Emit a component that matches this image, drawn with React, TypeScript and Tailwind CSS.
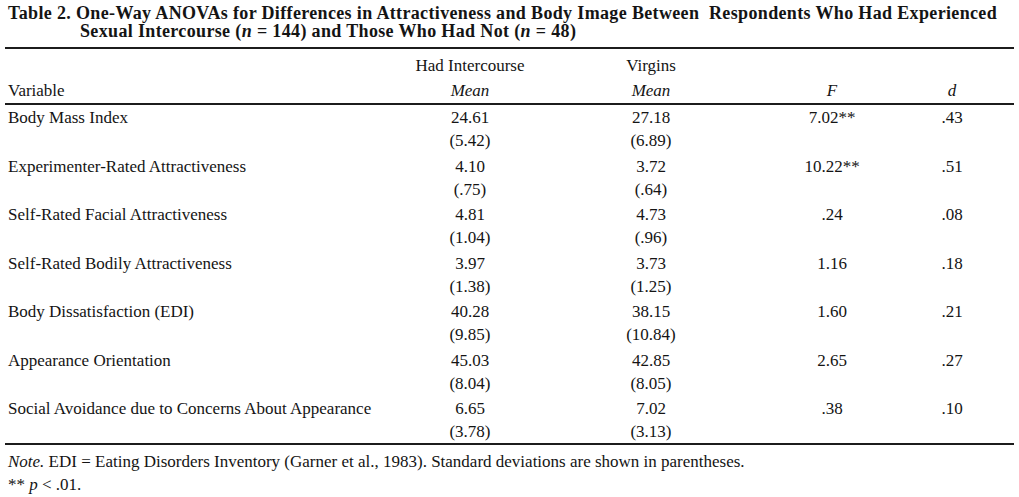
const rows = [
  { name: "Body Mass Index", had: ["24.61", "(5.42)"], vir: ["27.18", "(6.89)"], f: "7.02**", d: ".43" },
  { name: "Experimenter-Rated Attractiveness", had: ["4.10", "(.75)"], vir: ["3.72", "(.64)"], f: "10.22**", d: ".51" },
  { name: "Self-Rated Facial Attractiveness", had: ["4.81", "(1.04)"], vir: ["4.73", "(.96)"], f: ".24", d: ".08" },
  { name: "Self-Rated Bodily Attractiveness", had: ["3.97", "(1.38)"], vir: ["3.73", "(1.25)"], f: "1.16", d: ".18" },
  { name: "Body Dissatisfaction (EDI)", had: ["40.28", "(9.85)"], vir: ["38.15", "(10.84)"], f: "1.60", d: ".21" },
  { name: "Appearance Orientation", had: ["45.03", "(8.04)"], vir: ["42.85", "(8.05)"], f: "2.65", d: ".27" },
  { name: "Social Avoidance due to Concerns About Appearance", had: ["6.65", "(3.78)"], vir: ["7.02", "(3.13)"], f: ".38", d: ".10" },
];

const cols = "grid grid-cols-[392px_140px_222px_140px_100px]";

function Rule({ className = "" }: { className?: string }) {
  return <div className={`mx-[5px] h-[2px] bg-[#1c1c1c] ${className}`} />;
}

export default function App() {
  return (
    <div className="h-[497px] w-[1019px] overflow-hidden bg-white font-['Liberation_Serif','Times_New_Roman',serif] text-[17px] text-[#141414]">
      <div className="pl-2 pt-[4px] text-[18px] font-bold leading-[18px] tracking-[0.35px]">
        <div>Table 2. One-Way ANOVAs for Differences in Attractiveness and Body Image Between{"\u00a0 "}Respondents Who Had Experienced</div>
        <div className="pl-[72px]">
          Sexual Intercourse (<i>n</i> = 144) and Those Who Had Not (<i>n</i> = 48)
        </div>
      </div>
      <Rule className="mt-[7px]" />

      <div className={`${cols} mt-[4px] pl-2 leading-[25px]`}>
        <div className="flex flex-col">
          <span>&nbsp;</span>
          <span>Variable</span>
        </div>
        <div className="flex flex-col items-center">
          <span>Had Intercourse</span>
          <span className="italic">Mean</span>
        </div>
        <div className="flex flex-col items-center">
          <span>Virgins</span>
          <span className="italic">Mean</span>
        </div>
        <div className="flex flex-col items-center">
          <span>&nbsp;</span>
          <span className="italic">F</span>
        </div>
        <div className="flex flex-col items-center">
          <span>&nbsp;</span>
          <span className="italic">d</span>
        </div>
      </div>
      <Rule />

      <div className="pl-2 pt-[1px] leading-[23px]">
        {rows.map((row, i) => (
          <div key={row.name} className={`${cols} ${i < rows.length - 1 ? "pb-[2.5px]" : ""}`}>
            <div>{row.name}</div>
            <div className="flex flex-col items-center">
              <span>{row.had[0]}</span>
              <span>{row.had[1]}</span>
            </div>
            <div className="flex flex-col items-center">
              <span>{row.vir[0]}</span>
              <span>{row.vir[1]}</span>
            </div>
            <div className="text-center">{row.f}</div>
            <div className="text-center">{row.d}</div>
          </div>
        ))}
      </div>
      <Rule />

      <div className="mt-[5px] pl-2 leading-[23px]">
        <div>
          <i>Note.</i> EDI = Eating Disorders Inventory (Garner et al., 1983). Standard deviations are shown in parentheses.
        </div>
        <div>
          ** <i>p</i> &lt; .01.
        </div>
      </div>
    </div>
  );
}
